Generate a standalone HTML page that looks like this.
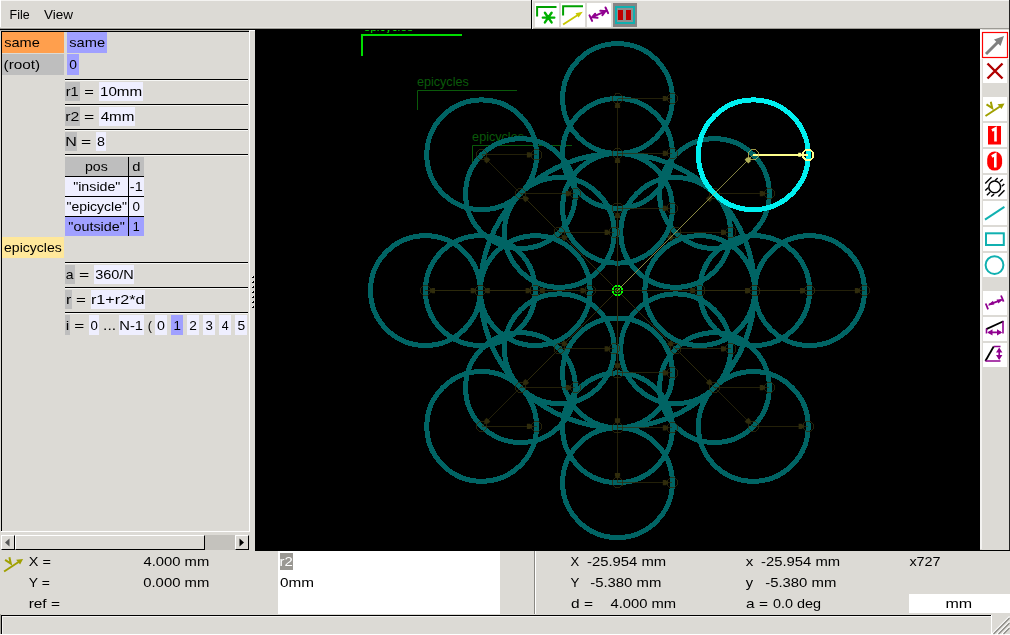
<!DOCTYPE html>
<html><head><meta charset="utf-8">
<style>
*{margin:0;padding:0;box-sizing:border-box}
html,body{width:1010px;height:635px;overflow:hidden;background:#dcdad5;font-family:"Liberation Sans",sans-serif;font-size:13px;color:#000;position:relative}
.a{position:absolute}
.g{position:absolute;background:#bebebe;height:19px}
.lv{position:absolute;background:#efefff;height:19px}
.pu{position:absolute;background:#a0a0ff;height:19px}
.rule{position:absolute;height:2px;left:65px;width:183px;border-top:1px solid #000;border-bottom:1px solid #f6f6f4}
.btn{position:absolute;background:#fff}
.rb{position:absolute;left:982px;width:26px;height:25px;background:#fff}
</style></head><body>
<!-- window edges -->
<div class="a" style="left:0;top:0;width:1010px;height:1px;background:#f4f3f1"></div>
<div class="a" style="left:0;top:0;width:1px;height:29px;background:#fff"></div>
<!-- menu -->
<div class="a" style="left:0;top:27px;width:531px;height:1px;background:#e6e5e1"></div>
<div class="a" style="left:0;top:28px;width:1010px;height:1px;background:#9c9a94"></div>
<div class="a" style="left:0;top:29px;width:1010px;height:1px;background:#000"></div>
<div class="a" style="left:0;top:30px;width:249px;height:1px;background:#b4b2ac"></div>
<!-- top toolbar -->
<div class="a" style="left:531px;top:0;width:1px;height:29px;background:#000"></div>
<div class="a" style="left:532px;top:0;width:1px;height:29px;background:#f4f3f1"></div>
<div class="btn" style="left:535px;top:3px;width:24px;height:24px"></div>
<div class="btn" style="left:561px;top:3px;width:24px;height:24px"></div>
<div class="btn" style="left:587px;top:3px;width:24px;height:24px"></div>
<svg class="a" style="left:530px;top:0" width="85" height="29" viewBox="530 0 85 29">
<path d="M537.1 16.5V7.1H556.5" stroke="#00a000" stroke-width="2" fill="none"/>
<path d="M542.8 17.6H554.3M544.9 12.7L551.6 22.4M551.6 12.7L544.9 22.4" stroke="#00b000" stroke-width="2.4" stroke-linecap="round"/>
<path d="M563.1 15.5V6.2H583" stroke="#00a000" stroke-width="2" fill="none"/>
<path d="M563.1 24.5L579 14.2" stroke="#c8c800" stroke-width="1.8"/>
<path d="M582.8 11.8L575.5 13.2L578.6 17.6Z" fill="#c8c800"/>
<path d="M592.1 17.2L605.7 11.2M589.5 15.3L592.1 20.9M605.5 7.5L608.1 13.1M595.2 13.7L592.1 17.2L597.5 17.8M600.3 10.8L605.5 11.2L602.4 15.1" stroke="#900090" stroke-width="2" fill="none" stroke-linecap="round"/>
</svg>
<div class="a" style="left:613px;top:3px;width:24px;height:24px;background:#858585">
<div class="a" style="left:2px;top:3px;width:20px;height:18px;border:2px solid #10b0b0;background:#909090"></div>
<div class="a" style="left:5px;top:7px;width:5px;height:10px;background:#c00000"></div>
<div class="a" style="left:13px;top:7px;width:5px;height:10px;background:#c00000"></div>
</div>

<!-- left panel -->
<div class="a" style="left:1px;top:31px;width:248px;height:1px;background:#000"></div>
<div class="a" style="left:1px;top:31px;width:1px;height:500px;background:#000"></div>
<div class="a" style="left:1px;top:531px;width:249px;height:1px;background:#fff"></div>
<div class="a" style="left:249px;top:31px;width:1px;height:501px;background:#fff"></div>
<div class="a" style="left:249px;top:30px;width:6px;height:1px;background:#fff"></div>
<!-- splitter grip -->
<svg class="a" style="left:250px;top:274px" width="5" height="36" shape-rendering="crispEdges"><rect x="2" y="2" width="1" height="1" fill="#fff"/><rect x="3" y="2" width="1" height="2" fill="#000"/><rect x="2" y="3" width="1" height="1" fill="#000"/><rect x="2" y="7" width="1" height="1" fill="#fff"/><rect x="3" y="7" width="1" height="2" fill="#000"/><rect x="2" y="8" width="1" height="1" fill="#000"/><rect x="2" y="12" width="1" height="1" fill="#fff"/><rect x="3" y="12" width="1" height="2" fill="#000"/><rect x="2" y="13" width="1" height="1" fill="#000"/><rect x="2" y="17" width="1" height="1" fill="#fff"/><rect x="3" y="17" width="1" height="2" fill="#000"/><rect x="2" y="18" width="1" height="1" fill="#000"/><rect x="2" y="22" width="1" height="1" fill="#fff"/><rect x="3" y="22" width="1" height="2" fill="#000"/><rect x="2" y="23" width="1" height="1" fill="#000"/><rect x="2" y="27" width="1" height="1" fill="#fff"/><rect x="3" y="27" width="1" height="2" fill="#000"/><rect x="2" y="28" width="1" height="1" fill="#000"/><rect x="2" y="32" width="1" height="1" fill="#fff"/><rect x="3" y="32" width="1" height="2" fill="#000"/><rect x="2" y="33" width="1" height="1" fill="#000"/></svg>

<div class="a" style="left:2px;top:32px;width:62px;height:21px;background:#ff9f4d"></div>
<div class="pu" style="left:67px;top:32px;width:40px;height:21px"></div>
<div class="g" style="left:2px;top:54px;width:62px;height:21px"></div>
<div class="pu" style="left:67px;top:54px;width:12px;height:21px"></div>

<div class="rule" style="top:79px"></div>
<div class="g" style="left:65px;top:82px;width:15px"></div>
<div class="lv" style="left:99px;top:82px;width:44px"></div>
<div class="rule" style="top:104px"></div>
<div class="g" style="left:65px;top:107px;width:15px"></div>
<div class="lv" style="left:99px;top:107px;width:36px"></div>
<div class="rule" style="top:129px"></div>
<div class="g" style="left:65px;top:132px;width:12px"></div>
<div class="lv" style="left:96px;top:132px;width:10px"></div>
<div class="rule" style="top:154px"></div>
<!-- table -->
<div class="g" style="left:65px;top:157px;width:79px"></div>
<div class="lv" style="left:65px;top:177px;width:79px"></div>
<div class="lv" style="left:65px;top:197px;width:79px"></div>
<div class="pu" style="left:65px;top:217px;width:79px"></div>
<div class="a" style="left:65px;top:176px;width:79px;height:1px;background:#000"></div>
<div class="a" style="left:65px;top:196px;width:79px;height:1px;background:#000"></div>
<div class="a" style="left:65px;top:216px;width:79px;height:1px;background:#000"></div>
<div class="a" style="left:128px;top:157px;width:1px;height:79px;background:#000"></div>

<div class="a" style="left:2px;top:237px;width:62px;height:21px;background:#ffe89b"></div>
<div class="rule" style="top:262px"></div>
<div class="g" style="left:65px;top:265px;width:10px"></div>
<div class="lv" style="left:94px;top:265px;width:40px"></div>
<div class="rule" style="top:287px"></div>
<div class="g" style="left:65px;top:290px;width:7px"></div>
<div class="lv" style="left:91px;top:290px;width:54px"></div>
<div class="rule" style="top:312px"></div>
<div class="g" style="left:65px;top:315px;width:5px;height:20px"></div>
<div class="lv" style="left:89px;top:315px;width:10px;height:20px"></div>
<div class="lv" style="left:119px;top:315px;width:25px;height:20px"></div>
<div class="lv" style="left:155px;top:315px;width:12px;height:20px"></div>
<div class="pu" style="left:171px;top:315px;width:12px;height:20px"></div>
<div class="lv" style="left:187px;top:315px;width:12px;height:20px"></div>
<div class="lv" style="left:203px;top:315px;width:12px;height:20px"></div>
<div class="lv" style="left:219px;top:315px;width:12px;height:20px"></div>
<div class="lv" style="left:235px;top:315px;width:12px;height:20px"></div>

<!-- scrollbar -->
<div class="a" style="left:1px;top:535px;width:248px;height:15px;background:#c4c2bd"></div>
<div class="a" style="left:1px;top:535px;width:14px;height:15px;background:#dcdad5;border-top:1px solid #fff;border-left:1px solid #fff;border-right:1px solid #000;border-bottom:1px solid #000"></div>
<svg class="a" style="left:4px;top:538px" width="8" height="10"><path d="M1 4.5L5.5 0.5V8.5Z" fill="#555"/></svg>
<div class="a" style="left:15px;top:535px;width:190px;height:15px;background:#dcdad5;border-top:1px solid #fff;border-left:1px solid #fff;border-right:1px solid #000;border-bottom:1px solid #000"></div>
<div class="a" style="left:235px;top:535px;width:14px;height:15px;background:#dcdad5;border-top:1px solid #fff;border-left:1px solid #fff;border-right:1px solid #000;border-bottom:1px solid #000"></div>
<svg class="a" style="left:238px;top:538px" width="8" height="10"><path d="M6 4.5L1.5 0.5V8.5Z" fill="#000"/></svg>

<!-- canvas -->
<div class="a" style="left:255px;top:29px;width:725px;height:522px;background:#000;overflow:hidden">
<svg class="a" style="left:-255px;top:-29px" width="1010" height="635">
<path d="M362 56V35H462" stroke="#00dc00" stroke-width="2" fill="none"/>
<path d="M417.5 110V90.5H517" stroke="#0a5a0a" stroke-width="1" fill="none"/>
<path d="M472.5 165V145.5H572" stroke="#0a5a0a" stroke-width="1" fill="none"/>
<clipPath id="lc"><rect x="255" y="30" width="725" height="600"/></clipPath>
<clipPath id="lc1"><rect x="255" y="30" width="725" height="3"/></clipPath>
<g font-family="Liberation Sans" font-size="13" clip-path="url(#lc1)"><text transform="translate(363.44,30.8) scale(0.9275,1)" fill="#00dc00">epicycles</text></g>
<g font-family="Liberation Sans" font-size="13"><text transform="translate(416.92,86) scale(0.9695,1)" fill="#0a5a0a">epicycles</text>
<text transform="translate(472.12,141) scale(0.9695,1)" fill="#0a5a0a">epicycles</text></g>
<circle cx="617.5" cy="290.6" r="137.2" stroke="#006464" stroke-width="5" fill="none" shape-rendering="crispEdges"/>
<circle cx="699.8" cy="290.6" r="54.9" stroke="#006464" stroke-width="5" fill="none" shape-rendering="crispEdges"/>
<circle cx="675.7" cy="232.4" r="54.9" stroke="#006464" stroke-width="5" fill="none" shape-rendering="crispEdges"/>
<circle cx="617.5" cy="208.3" r="54.9" stroke="#006464" stroke-width="5" fill="none" shape-rendering="crispEdges"/>
<circle cx="559.3" cy="232.4" r="54.9" stroke="#006464" stroke-width="5" fill="none" shape-rendering="crispEdges"/>
<circle cx="535.2" cy="290.6" r="54.9" stroke="#006464" stroke-width="5" fill="none" shape-rendering="crispEdges"/>
<circle cx="559.3" cy="348.8" r="54.9" stroke="#006464" stroke-width="5" fill="none" shape-rendering="crispEdges"/>
<circle cx="617.5" cy="372.9" r="54.9" stroke="#006464" stroke-width="5" fill="none" shape-rendering="crispEdges"/>
<circle cx="675.7" cy="348.8" r="54.9" stroke="#006464" stroke-width="5" fill="none" shape-rendering="crispEdges"/>
<circle cx="754.7" cy="290.6" r="54.9" stroke="#006464" stroke-width="5" fill="none" shape-rendering="crispEdges"/>
<circle cx="714.5" cy="193.6" r="54.9" stroke="#006464" stroke-width="5" fill="none" shape-rendering="crispEdges"/>
<circle cx="617.5" cy="153.4" r="54.9" stroke="#006464" stroke-width="5" fill="none" shape-rendering="crispEdges"/>
<circle cx="520.5" cy="193.6" r="54.9" stroke="#006464" stroke-width="5" fill="none" shape-rendering="crispEdges"/>
<circle cx="480.3" cy="290.6" r="54.9" stroke="#006464" stroke-width="5" fill="none" shape-rendering="crispEdges"/>
<circle cx="520.5" cy="387.6" r="54.9" stroke="#006464" stroke-width="5" fill="none" shape-rendering="crispEdges"/>
<circle cx="617.5" cy="427.8" r="54.9" stroke="#006464" stroke-width="5" fill="none" shape-rendering="crispEdges"/>
<circle cx="714.5" cy="387.6" r="54.9" stroke="#006464" stroke-width="5" fill="none" shape-rendering="crispEdges"/>
<circle cx="809.6" cy="290.6" r="54.9" stroke="#006464" stroke-width="5" fill="none" shape-rendering="crispEdges"/>
<circle cx="617.5" cy="98.5" r="54.9" stroke="#006464" stroke-width="5" fill="none" shape-rendering="crispEdges"/>
<circle cx="481.7" cy="154.8" r="54.9" stroke="#006464" stroke-width="5" fill="none" shape-rendering="crispEdges"/>
<circle cx="425.4" cy="290.6" r="54.9" stroke="#006464" stroke-width="5" fill="none" shape-rendering="crispEdges"/>
<circle cx="481.7" cy="426.4" r="54.9" stroke="#006464" stroke-width="5" fill="none" shape-rendering="crispEdges"/>
<circle cx="617.5" cy="482.7" r="54.9" stroke="#006464" stroke-width="5" fill="none" shape-rendering="crispEdges"/>
<circle cx="753.3" cy="426.4" r="54.9" stroke="#006464" stroke-width="5" fill="none" shape-rendering="crispEdges"/>
<circle cx="617.5" cy="290.6" r="4.6" stroke="#00ff00" stroke-width="2" fill="none" shape-rendering="crispEdges"/>
<circle cx="617.5" cy="290.6" r="2.2" stroke="#00e000" stroke-width="1" fill="none" shape-rendering="crispEdges"/>
<path d="M617.5 290.6L699.8 290.6M699.8 290.6H754.7M617.5 290.6L675.7 232.4M675.7 232.4H730.6M617.5 290.6L617.5 208.3M617.5 208.3H672.4M617.5 290.6L559.3 232.4M559.3 232.4H614.2M617.5 290.6L535.2 290.6M535.2 290.6H590.1M617.5 290.6L559.3 348.8M559.3 348.8H614.2M617.5 290.6L617.5 372.9M617.5 372.9H672.4M617.5 290.6L675.7 348.8M675.7 348.8H730.6M617.5 290.6L754.7 290.6M754.7 290.6H809.6M617.5 290.6L714.5 193.6M714.5 193.6H769.4M617.5 290.6L617.5 153.4M617.5 153.4H672.4M617.5 290.6L520.5 193.6M520.5 193.6H575.4M617.5 290.6L480.3 290.6M480.3 290.6H535.2M617.5 290.6L520.5 387.6M520.5 387.6H575.4M617.5 290.6L617.5 427.8M617.5 427.8H672.4M617.5 290.6L714.5 387.6M714.5 387.6H769.4M617.5 290.6L809.6 290.6M809.6 290.6H864.5M617.5 290.6L617.5 98.5M617.5 98.5H672.4M617.5 290.6L481.7 154.8M481.7 154.8H536.5M617.5 290.6L425.4 290.6M425.4 290.6H480.3M617.5 290.6L481.7 426.4M481.7 426.4H536.5M617.5 290.6L617.5 482.7M617.5 482.7H672.4M617.5 290.6L753.3 426.4M753.3 426.4H808.2" stroke="#302c0c" stroke-width="0.72" fill="none" shape-rendering="crispEdges"/>
<path d="M696.2 290.6L693.2 293.2L690.2 293.2L690.2 288.0L693.2 288.0Z" fill="#302c0c"/>
<path d="M751.1 290.6L748.1 293.2L745.1 293.2L745.1 288.0L748.1 288.0Z" fill="#302c0c"/>
<path d="M697.5 285.6L702.1 285.6L704.8 288.3L704.8 292.9L702.1 295.6L697.5 295.6L694.8 292.9L694.8 288.3ZM752.4 285.6L757.0 285.6L759.7 288.3L759.7 292.9L757.0 295.6L752.4 295.6L749.7 292.9L749.7 288.3Z" stroke="#302c0c" stroke-width="0.8" fill="none" shape-rendering="crispEdges"/>
<path d="M673.2 234.9L672.9 238.9L670.8 241.0L667.1 237.3L669.2 235.2Z" fill="#302c0c"/>
<path d="M727.0 232.4L724.0 235.0L721.0 235.0L721.0 229.8L724.0 229.8Z" fill="#302c0c"/>
<path d="M673.4 227.4L678.0 227.4L680.7 230.1L680.7 234.7L678.0 237.4L673.4 237.4L670.7 234.7L670.7 230.1ZM728.3 227.4L732.9 227.4L735.6 230.1L735.6 234.7L732.9 237.4L728.3 237.4L725.6 234.7L725.6 230.1Z" stroke="#302c0c" stroke-width="0.8" fill="none" shape-rendering="crispEdges"/>
<path d="M617.5 211.9L620.1 214.9L620.1 217.9L614.9 217.9L614.9 214.9Z" fill="#302c0c"/>
<path d="M668.8 208.3L665.8 210.9L662.8 210.9L662.8 205.7L665.8 205.7Z" fill="#302c0c"/>
<path d="M615.2 203.3L619.8 203.3L622.5 206.0L622.5 210.6L619.8 213.3L615.2 213.3L612.5 210.6L612.5 206.0ZM670.1 203.3L674.7 203.3L677.4 206.0L677.4 210.6L674.7 213.3L670.1 213.3L667.4 210.6L667.4 206.0Z" stroke="#302c0c" stroke-width="0.8" fill="none" shape-rendering="crispEdges"/>
<path d="M561.8 234.9L565.8 235.2L567.9 237.3L564.2 241.0L562.1 238.9Z" fill="#302c0c"/>
<path d="M610.6 232.4L607.6 235.0L604.6 235.0L604.6 229.8L607.6 229.8Z" fill="#302c0c"/>
<path d="M557.0 227.4L561.6 227.4L564.3 230.1L564.3 234.7L561.6 237.4L557.0 237.4L554.3 234.7L554.3 230.1ZM611.9 227.4L616.5 227.4L619.2 230.1L619.2 234.7L616.5 237.4L611.9 237.4L609.2 234.7L609.2 230.1Z" stroke="#302c0c" stroke-width="0.8" fill="none" shape-rendering="crispEdges"/>
<path d="M538.8 290.6L541.8 288.0L544.8 288.0L544.8 293.2L541.8 293.2Z" fill="#302c0c"/>
<path d="M586.5 290.6L583.5 293.2L580.5 293.2L580.5 288.0L583.5 288.0Z" fill="#302c0c"/>
<path d="M532.9 285.6L537.5 285.6L540.2 288.3L540.2 292.9L537.5 295.6L532.9 295.6L530.2 292.9L530.2 288.3ZM587.8 285.6L592.4 285.6L595.1 288.3L595.1 292.9L592.4 295.6L587.8 295.6L585.1 292.9L585.1 288.3Z" stroke="#302c0c" stroke-width="0.8" fill="none" shape-rendering="crispEdges"/>
<path d="M561.8 346.3L562.1 342.3L564.2 340.2L567.9 343.9L565.8 346.0Z" fill="#302c0c"/>
<path d="M610.6 348.8L607.6 351.4L604.6 351.4L604.6 346.2L607.6 346.2Z" fill="#302c0c"/>
<path d="M557.0 343.8L561.6 343.8L564.3 346.5L564.3 351.1L561.6 353.8L557.0 353.8L554.3 351.1L554.3 346.5ZM611.9 343.8L616.5 343.8L619.2 346.5L619.2 351.1L616.5 353.8L611.9 353.8L609.2 351.1L609.2 346.5Z" stroke="#302c0c" stroke-width="0.8" fill="none" shape-rendering="crispEdges"/>
<path d="M617.5 369.3L614.9 366.3L614.9 363.3L620.1 363.3L620.1 366.3Z" fill="#302c0c"/>
<path d="M668.8 372.9L665.8 375.5L662.8 375.5L662.8 370.3L665.8 370.3Z" fill="#302c0c"/>
<path d="M615.2 367.9L619.8 367.9L622.5 370.6L622.5 375.2L619.8 377.9L615.2 377.9L612.5 375.2L612.5 370.6ZM670.1 367.9L674.7 367.9L677.4 370.6L677.4 375.2L674.7 377.9L670.1 377.9L667.4 375.2L667.4 370.6Z" stroke="#302c0c" stroke-width="0.8" fill="none" shape-rendering="crispEdges"/>
<path d="M673.2 346.3L669.2 346.0L667.1 343.9L670.8 340.2L672.9 342.3Z" fill="#302c0c"/>
<path d="M727.0 348.8L724.0 351.4L721.0 351.4L721.0 346.2L724.0 346.2Z" fill="#302c0c"/>
<path d="M673.4 343.8L678.0 343.8L680.7 346.5L680.7 351.1L678.0 353.8L673.4 353.8L670.7 351.1L670.7 346.5ZM728.3 343.8L732.9 343.8L735.6 346.5L735.6 351.1L732.9 353.8L728.3 353.8L725.6 351.1L725.6 346.5Z" stroke="#302c0c" stroke-width="0.8" fill="none" shape-rendering="crispEdges"/>
<path d="M751.1 290.6L748.1 293.2L745.1 293.2L745.1 288.0L748.1 288.0Z" fill="#302c0c"/>
<path d="M806.0 290.6L803.0 293.2L800.0 293.2L800.0 288.0L803.0 288.0Z" fill="#302c0c"/>
<path d="M752.4 285.6L757.0 285.6L759.7 288.3L759.7 292.9L757.0 295.6L752.4 295.6L749.7 292.9L749.7 288.3ZM807.3 285.6L811.9 285.6L814.6 288.3L814.6 292.9L811.9 295.6L807.3 295.6L804.6 292.9L804.6 288.3Z" stroke="#302c0c" stroke-width="0.8" fill="none" shape-rendering="crispEdges"/>
<path d="M712.0 196.1L711.7 200.1L709.6 202.2L705.9 198.5L708.0 196.4Z" fill="#302c0c"/>
<path d="M765.8 193.6L762.8 196.2L759.8 196.2L759.8 191.0L762.8 191.0Z" fill="#302c0c"/>
<path d="M712.2 188.6L716.8 188.6L719.5 191.3L719.5 195.9L716.8 198.6L712.2 198.6L709.5 195.9L709.5 191.3ZM767.1 188.6L771.7 188.6L774.4 191.3L774.4 195.9L771.7 198.6L767.1 198.6L764.4 195.9L764.4 191.3Z" stroke="#302c0c" stroke-width="0.8" fill="none" shape-rendering="crispEdges"/>
<path d="M617.5 157.0L620.1 160.0L620.1 163.0L614.9 163.0L614.9 160.0Z" fill="#302c0c"/>
<path d="M668.8 153.4L665.8 156.0L662.8 156.0L662.8 150.8L665.8 150.8Z" fill="#302c0c"/>
<path d="M615.2 148.4L619.8 148.4L622.5 151.1L622.5 155.7L619.8 158.4L615.2 158.4L612.5 155.7L612.5 151.1ZM670.1 148.4L674.7 148.4L677.4 151.1L677.4 155.7L674.7 158.4L670.1 158.4L667.4 155.7L667.4 151.1Z" stroke="#302c0c" stroke-width="0.8" fill="none" shape-rendering="crispEdges"/>
<path d="M523.0 196.1L527.0 196.4L529.1 198.5L525.4 202.2L523.3 200.1Z" fill="#302c0c"/>
<path d="M571.8 193.6L568.8 196.2L565.8 196.2L565.8 191.0L568.8 191.0Z" fill="#302c0c"/>
<path d="M518.2 188.6L522.8 188.6L525.5 191.3L525.5 195.9L522.8 198.6L518.2 198.6L515.5 195.9L515.5 191.3ZM573.1 188.6L577.7 188.6L580.4 191.3L580.4 195.9L577.7 198.6L573.1 198.6L570.4 195.9L570.4 191.3Z" stroke="#302c0c" stroke-width="0.8" fill="none" shape-rendering="crispEdges"/>
<path d="M483.9 290.6L486.9 288.0L489.9 288.0L489.9 293.2L486.9 293.2Z" fill="#302c0c"/>
<path d="M531.6 290.6L528.6 293.2L525.6 293.2L525.6 288.0L528.6 288.0Z" fill="#302c0c"/>
<path d="M478.0 285.6L482.6 285.6L485.3 288.3L485.3 292.9L482.6 295.6L478.0 295.6L475.3 292.9L475.3 288.3ZM532.9 285.6L537.5 285.6L540.2 288.3L540.2 292.9L537.5 295.6L532.9 295.6L530.2 292.9L530.2 288.3Z" stroke="#302c0c" stroke-width="0.8" fill="none" shape-rendering="crispEdges"/>
<path d="M523.0 385.1L523.3 381.1L525.4 379.0L529.1 382.7L527.0 384.8Z" fill="#302c0c"/>
<path d="M571.8 387.6L568.8 390.2L565.8 390.2L565.8 385.0L568.8 385.0Z" fill="#302c0c"/>
<path d="M518.2 382.6L522.8 382.6L525.5 385.3L525.5 389.9L522.8 392.6L518.2 392.6L515.5 389.9L515.5 385.3ZM573.1 382.6L577.7 382.6L580.4 385.3L580.4 389.9L577.7 392.6L573.1 392.6L570.4 389.9L570.4 385.3Z" stroke="#302c0c" stroke-width="0.8" fill="none" shape-rendering="crispEdges"/>
<path d="M617.5 424.2L614.9 421.2L614.9 418.2L620.1 418.2L620.1 421.2Z" fill="#302c0c"/>
<path d="M668.8 427.8L665.8 430.4L662.8 430.4L662.8 425.2L665.8 425.2Z" fill="#302c0c"/>
<path d="M615.2 422.8L619.8 422.8L622.5 425.5L622.5 430.1L619.8 432.8L615.2 432.8L612.5 430.1L612.5 425.5ZM670.1 422.8L674.7 422.8L677.4 425.5L677.4 430.1L674.7 432.8L670.1 432.8L667.4 430.1L667.4 425.5Z" stroke="#302c0c" stroke-width="0.8" fill="none" shape-rendering="crispEdges"/>
<path d="M712.0 385.1L708.0 384.8L705.9 382.7L709.6 379.0L711.7 381.1Z" fill="#302c0c"/>
<path d="M765.8 387.6L762.8 390.2L759.8 390.2L759.8 385.0L762.8 385.0Z" fill="#302c0c"/>
<path d="M712.2 382.6L716.8 382.6L719.5 385.3L719.5 389.9L716.8 392.6L712.2 392.6L709.5 389.9L709.5 385.3ZM767.1 382.6L771.7 382.6L774.4 385.3L774.4 389.9L771.7 392.6L767.1 392.6L764.4 389.9L764.4 385.3Z" stroke="#302c0c" stroke-width="0.8" fill="none" shape-rendering="crispEdges"/>
<path d="M806.0 290.6L803.0 293.2L800.0 293.2L800.0 288.0L803.0 288.0Z" fill="#302c0c"/>
<path d="M860.9 290.6L857.9 293.2L854.9 293.2L854.9 288.0L857.9 288.0Z" fill="#302c0c"/>
<path d="M807.3 285.6L811.9 285.6L814.6 288.3L814.6 292.9L811.9 295.6L807.3 295.6L804.6 292.9L804.6 288.3ZM862.2 285.6L866.8 285.6L869.5 288.3L869.5 292.9L866.8 295.6L862.2 295.6L859.5 292.9L859.5 288.3Z" stroke="#302c0c" stroke-width="0.8" fill="none" shape-rendering="crispEdges"/>
<path d="M617.5 102.1L620.1 105.1L620.1 108.1L614.9 108.1L614.9 105.1Z" fill="#302c0c"/>
<path d="M668.8 98.5L665.8 101.1L662.8 101.1L662.8 95.9L665.8 95.9Z" fill="#302c0c"/>
<path d="M615.2 93.5L619.8 93.5L622.5 96.2L622.5 100.8L619.8 103.5L615.2 103.5L612.5 100.8L612.5 96.2ZM670.1 93.5L674.7 93.5L677.4 96.2L677.4 100.8L674.7 103.5L670.1 103.5L667.4 100.8L667.4 96.2Z" stroke="#302c0c" stroke-width="0.8" fill="none" shape-rendering="crispEdges"/>
<path d="M484.2 157.3L488.2 157.6L490.3 159.7L486.6 163.4L484.5 161.3Z" fill="#302c0c"/>
<path d="M532.9 154.8L529.9 157.4L526.9 157.4L526.9 152.2L529.9 152.2Z" fill="#302c0c"/>
<path d="M479.4 149.8L484.0 149.8L486.7 152.5L486.7 157.1L484.0 159.8L479.4 159.8L476.7 157.1L476.7 152.5ZM534.2 149.8L538.8 149.8L541.5 152.5L541.5 157.1L538.8 159.8L534.2 159.8L531.5 157.1L531.5 152.5Z" stroke="#302c0c" stroke-width="0.8" fill="none" shape-rendering="crispEdges"/>
<path d="M429.0 290.6L432.0 288.0L435.0 288.0L435.0 293.2L432.0 293.2Z" fill="#302c0c"/>
<path d="M476.7 290.6L473.7 293.2L470.7 293.2L470.7 288.0L473.7 288.0Z" fill="#302c0c"/>
<path d="M423.1 285.6L427.7 285.6L430.4 288.3L430.4 292.9L427.7 295.6L423.1 295.6L420.4 292.9L420.4 288.3ZM478.0 285.6L482.6 285.6L485.3 288.3L485.3 292.9L482.6 295.6L478.0 295.6L475.3 292.9L475.3 288.3Z" stroke="#302c0c" stroke-width="0.8" fill="none" shape-rendering="crispEdges"/>
<path d="M484.2 423.9L484.5 419.9L486.6 417.8L490.3 421.5L488.2 423.6Z" fill="#302c0c"/>
<path d="M532.9 426.4L529.9 429.0L526.9 429.0L526.9 423.8L529.9 423.8Z" fill="#302c0c"/>
<path d="M479.4 421.4L484.0 421.4L486.7 424.1L486.7 428.7L484.0 431.4L479.4 431.4L476.7 428.7L476.7 424.1ZM534.2 421.4L538.8 421.4L541.5 424.1L541.5 428.7L538.8 431.4L534.2 431.4L531.5 428.7L531.5 424.1Z" stroke="#302c0c" stroke-width="0.8" fill="none" shape-rendering="crispEdges"/>
<path d="M617.5 479.1L614.9 476.1L614.9 473.1L620.1 473.1L620.1 476.1Z" fill="#302c0c"/>
<path d="M668.8 482.7L665.8 485.3L662.8 485.3L662.8 480.1L665.8 480.1Z" fill="#302c0c"/>
<path d="M615.2 477.7L619.8 477.7L622.5 480.4L622.5 485.0L619.8 487.7L615.2 487.7L612.5 485.0L612.5 480.4ZM670.1 477.7L674.7 477.7L677.4 480.4L677.4 485.0L674.7 487.7L670.1 487.7L667.4 485.0L667.4 480.4Z" stroke="#302c0c" stroke-width="0.8" fill="none" shape-rendering="crispEdges"/>
<path d="M750.8 423.9L746.8 423.6L744.7 421.5L748.4 417.8L750.5 419.9Z" fill="#302c0c"/>
<path d="M804.6 426.4L801.6 429.0L798.6 429.0L798.6 423.8L801.6 423.8Z" fill="#302c0c"/>
<path d="M751.0 421.4L755.6 421.4L758.3 424.1L758.3 428.7L755.6 431.4L751.0 431.4L748.3 428.7L748.3 424.1ZM805.9 421.4L810.5 421.4L813.2 424.1L813.2 428.7L810.5 431.4L805.9 431.4L803.2 428.7L803.2 424.1Z" stroke="#302c0c" stroke-width="0.8" fill="none" shape-rendering="crispEdges"/>
<circle cx="753.3" cy="154.8" r="54.9" stroke="#00f0f0" stroke-width="5" fill="none" shape-rendering="crispEdges"/>
<line x1="617.5" y1="290.6" x2="753.3" y2="154.8" stroke="#b4b45a" stroke-width="0.72" shape-rendering="crispEdges"/>
<path d="M750.8 157.3L750.5 161.3L748.4 163.4L744.7 159.7L746.8 157.6Z" fill="#b4b45a"/>
<path d="M753.3 154.8H808.2" stroke="#ffff8c" stroke-width="2" shape-rendering="crispEdges"/>
<path d="M802.2 154.8L800.7 156.8L798.2 156.8L798.2 152.8L800.7 152.8Z" fill="#ffff8c"/>
<path d="M751.0 149.8L755.6 149.8L758.3 152.5L758.3 157.1L755.6 159.8L751.0 159.8L748.3 157.1L748.3 152.5Z" stroke="#c8be5a" stroke-width="0.8" fill="none" shape-rendering="crispEdges"/>
<path d="M805.9 149.8L810.5 149.8L813.2 152.5L813.2 157.1L810.5 159.8L805.9 159.8L803.2 157.1L803.2 152.5Z" stroke="#ffff8c" stroke-width="1.6" fill="none" shape-rendering="crispEdges"/>
</svg>
</div>

<!-- right toolbar -->
<div class="a" style="left:980px;top:29px;width:29px;height:520px;background:#dcdad5;border-left:2px solid #f4f3f1"></div>
<div class="a" style="left:1009px;top:0;width:1px;height:551px;background:#222"></div>
<div class="a" style="left:980px;top:550px;width:30px;height:1px;background:#000"></div>
<svg class="a" style="left:980px;top:29px" width="30" height="521" viewBox="980 29 30 521">
<rect x="980" y="30" width="29" height="29" fill="#fff"/>
<rect x="982.5" y="32.5" width="25" height="25" fill="none" stroke="#f00" stroke-width="1.2"/>
<path d="M986 54L999 41" stroke="#808080" stroke-width="3"/>
<path d="M1004 36L994 39.5L1000.5 46Z" fill="#808080"/>
<rect x="983" y="59" width="24" height="24" fill="#fff"/>
<path d="M987.5 63.5L1002.5 78.5M1002.5 63.5L987.5 78.5" stroke="#b00000" stroke-width="2.4"/>
<rect x="983" y="97" width="24" height="24" fill="#fff"/>
<path d="M985.5 116L1000 106.5" stroke="#a0a000" stroke-width="2"/>
<path d="M1004.5 103.4L997.5 104.2L1001.5 109Z" fill="#a0a000"/>
<path d="M986.5 104.4L992.2 108.1L990.8 101.7" stroke="#a0a000" stroke-width="2" fill="none"/>
<rect x="983" y="123" width="24" height="24" fill="#fff"/>
<rect x="988" y="126" width="13" height="18.5" fill="#f00"/>
<path d="M992 130.5L995.5 128.5V141.5" stroke="#fff" stroke-width="2.6" fill="none"/>
<rect x="983" y="149" width="24" height="24" fill="#fff"/>
<rect x="987.2" y="151.6" width="14.9" height="19" rx="7.4" ry="7.4" fill="#f00"/>
<path d="M991.8 156.5L995.3 154.5V167.5" stroke="#fff" stroke-width="2.6" fill="none"/>
<rect x="983" y="175" width="24" height="24" fill="#fff"/>
<circle cx="994.7" cy="186.9" r="5.9" fill="none" stroke="#000" stroke-width="1.5"/>
<path d="M985.2 183.6L991.5 177.2M995.1 180.4L997.7 177.9M1000 181.8L1002.7 179.3M1001.7 186.3L1004.3 184M998.4 196.5L1004.5 190.2M985.3 190.6L988.1 187.7M986.9 195.3L990.2 192M991.2 196.5L994.1 194.1" stroke="#000" stroke-width="1.4"/>
<rect x="983" y="201" width="24" height="24" fill="#fff"/>
<path d="M985 219.7L1004.4 206.8" stroke="#10b0b0" stroke-width="2"/>
<rect x="983" y="227" width="24" height="24" fill="#fff"/>
<rect x="986" y="233.3" width="17.8" height="11.7" fill="none" stroke="#10b0b0" stroke-width="2"/>
<rect x="983" y="253" width="24" height="24" fill="#fff"/>
<circle cx="994.5" cy="265.1" r="8.9" fill="none" stroke="#10b0b0" stroke-width="2"/>
<rect x="983" y="291" width="24" height="24" fill="#fff"/>
<path d="M989 304.7L1001.5 299.8M985.7 303.5L988.1 309.4M1001 295.5L1003.6 301.7" stroke="#900090" stroke-width="1.8" fill="none"/>
<path d="M987.5 305.4L993 300.7L994.3 304.4Z M1002.9 299.2L996.6 299.6L998.4 303.6Z" fill="#900090"/>
<rect x="983" y="317" width="24" height="24" fill="#fff"/>
<path d="M986.3 329.1L1003.5 321.3" stroke="#000" stroke-width="1.8"/>
<path d="M1003 321.3V333.5M986.5 328.5V333.5M988.5 332.4H1001" stroke="#900090" stroke-width="1.6" fill="none"/>
<path d="M987.3 332.4L992.5 329.3V335.5Z M1002.2 332.4L997 329.3V335.5Z" fill="#900090"/>
<rect x="983" y="343" width="24" height="24" fill="#fff"/>
<path d="M985.4 361L993.7 346.5" stroke="#000" stroke-width="1.8"/>
<path d="M993.7 346.5H1000.5M985.4 361H1000.5M999.2 349V359" stroke="#900090" stroke-width="1.6" fill="none"/>
<path d="M999.2 347.5L996 352.5H1002.4Z M999.2 360L996 355H1002.4Z" fill="#900090"/>
</svg>


<!-- status -->
<svg class="a" style="left:0;top:550px" width="30" height="30" viewBox="0 550 30 30"><g transform="translate(-981.4,455.5)"><path d="M985.5 116L1000 106.5" stroke="#a0a000" stroke-width="2"/><path d="M1004.5 103.4L997.5 104.2L1001.5 109Z" fill="#a0a000"/><path d="M986.5 104.4L992.2 108.1L990.8 101.7" stroke="#a0a000" stroke-width="2" fill="none"/></g></svg>
<div class="a" style="left:278px;top:551px;width:222px;height:63px;background:#fff"></div>
<div class="a" style="left:280px;top:553px;width:13px;height:17px;background:#9a9893"></div>
<div class="a" style="left:534px;top:551px;width:1px;height:63px;background:#8a8883"></div>
<div class="a" style="left:535px;top:551px;width:1px;height:63px;background:#fff"></div>
<div class="a" style="left:909px;top:594px;width:101px;height:19px;background:#fff"></div>
<!-- status bar -->
<div class="a" style="left:0;top:614px;width:1px;height:21px;background:#a8a69f"></div>
<div class="a" style="left:1px;top:615px;width:990px;height:1px;background:#000"></div>
<div class="a" style="left:1px;top:615px;width:1px;height:19px;background:#000"></div>
<div class="a" style="left:2px;top:616px;width:989px;height:1px;background:#f4f3f1"></div>
<div class="a" style="left:2px;top:616px;width:1px;height:18px;background:#f4f3f1"></div>
<div class="a" style="left:0;top:634px;width:1010px;height:1px;background:#fff"></div>
<div class="a" style="left:991px;top:615px;width:1px;height:19px;background:#fff"></div>
<svg class="a" style="left:990px;top:614px" width="20" height="21" viewBox="990 614 20 21"><path d="M992 634L1009.5 616.5M997 634L1009.5 621.5M1002 634L1009.5 626.5" stroke="#fff" stroke-width="1.2"/><path d="M993.5 634L1009.5 618M998.5 634L1009.5 623M1003.5 634L1009.5 628" stroke="#8a8883" stroke-width="1.2"/></svg>

<svg class="a" style="left:0;top:0;will-change:transform" width="1010" height="635" font-family="Liberation Sans" font-size="13">
<text transform="translate(9.55,19) scale(0.9585,1)" fill="#000">File</text>
<text transform="translate(43.90,19) scale(1.0396,1)" fill="#000">View</text>
<text transform="translate(4.15,47) scale(1.1234,1)" fill="#000">same</text>
<text transform="translate(69.25,47) scale(1.1266,1)" fill="#000">same</text>
<text transform="translate(3.56,69) scale(1.1803,1)" fill="#000">(root)</text>
<text transform="translate(69.17,69) scale(1.0645,1)" fill="#000">0</text>
<text transform="translate(65.69,96) scale(1.1200,1)" fill="#000">r1</text>
<text transform="translate(84.14,96) scale(1.2698,1)" fill="#000">=</text>
<text transform="translate(99.93,96) scale(1.1720,1)" fill="#000">10mm</text>
<text transform="translate(65.20,121) scale(1.2200,1)" fill="#000">r2</text>
<text transform="translate(83.89,121) scale(1.3492,1)" fill="#000">=</text>
<text transform="translate(100.65,121) scale(1.1697,1)" fill="#000">4mm</text>
<text transform="translate(65.14,146) scale(1.2361,1)" fill="#000">N</text>
<text transform="translate(80.90,146) scale(1.3333,1)" fill="#000">=</text>
<text transform="translate(97.04,146) scale(1.0984,1)" fill="#000">8</text>
<text transform="translate(84.93,170.5) scale(1.0863,1)" fill="#000">pos</text>
<text transform="translate(132.13,170.5) scale(1.1356,1)" fill="#000">d</text>
<text transform="translate(73.14,191) scale(1.0952,1)" fill="#000">&quot;inside&quot;</text>
<text transform="translate(129.83,191) scale(1.1165,1)" fill="#000">-1</text>
<text transform="translate(66.45,211) scale(1.0764,1)" fill="#000">&quot;epicycle&quot;</text>
<text transform="translate(132.48,211) scale(1.0323,1)" fill="#000">0</text>
<text transform="translate(68.34,231) scale(1.1040,1)" fill="#000">&quot;outside&quot;</text>
<text transform="translate(132.64,231) scale(0.9643,1)" fill="#000">1</text>
<text transform="translate(4.05,252) scale(1.0802,1)" fill="#000">epicycles</text>
<text transform="translate(65.85,279) scale(1.0758,1)" fill="#000">a</text>
<text transform="translate(78.89,279) scale(1.3492,1)" fill="#000">=</text>
<text transform="translate(95.14,279) scale(1.1148,1)" fill="#000">360/N</text>
<text transform="translate(65.90,304) scale(1.2200,1)" fill="#000">r</text>
<text transform="translate(76.02,304) scale(1.3016,1)" fill="#000">=</text>
<text transform="translate(90.98,304) scale(1.2446,1)" fill="#000">r1+r2*d</text>
<text transform="translate(65.73,329.5) scale(1.2200,1)" fill="#000">i</text>
<text transform="translate(74.21,329.5) scale(1.3175,1)" fill="#000">=</text>
<text transform="translate(90.39,329.5) scale(1.0161,1)" fill="#000">0</text>
<text transform="translate(103.06,329.5) scale(1.2024,1)" fill="#000">...</text>
<text transform="translate(119.25,329.5) scale(1.1354,1)" fill="#000">N-1</text>
<text transform="translate(147.82,329.5) scale(0.9706,1)" fill="#000">(</text>
<text transform="translate(157.05,329.5) scale(1.0968,1)" fill="#000">0</text>
<text transform="translate(173.48,329.5) scale(1.0179,1)" fill="#000">1</text>
<text transform="translate(189.16,329.5) scale(1.0508,1)" fill="#000">2</text>
<text transform="translate(205.39,329.5) scale(1.0161,1)" fill="#000">3</text>
<text transform="translate(221.71,329.5) scale(0.9538,1)" fill="#000">4</text>
<text transform="translate(237.47,329.5) scale(1.0645,1)" fill="#000">5</text>
<text transform="translate(28.87,566) scale(1.1111,1)" fill="#000">X =</text>
<text transform="translate(28.77,587) scale(1.0699,1)" fill="#000">Y =</text>
<text transform="translate(28.63,608) scale(1.1895,1)" fill="#000">ref =</text>
<text transform="translate(143.46,566) scale(1.1396,1)" fill="#000">4.000 mm</text>
<text transform="translate(143.23,587) scale(1.1436,1)" fill="#000">0.000 mm</text>
<text transform="translate(279.56,566) scale(1.1500,1)" fill="#fff">r2</text>
<text transform="translate(280.01,587) scale(1.1782,1)" fill="#000">0mm</text>
<text transform="translate(570.60,566) scale(1.0000,1)" fill="#000">X</text>
<text transform="translate(587.01,566) scale(1.1429,1)" fill="#000">-25.954 mm</text>
<text transform="translate(570.49,587) scale(1.0253,1)" fill="#000">Y</text>
<text transform="translate(590.21,587) scale(1.1450,1)" fill="#000">-5.380 mm</text>
<text transform="translate(571.00,608) scale(1.1908,1)" fill="#000">d =</text>
<text transform="translate(610.46,608) scale(1.1378,1)" fill="#000">4.000 mm</text>
<text transform="translate(745.67,566) scale(1.1639,1)" fill="#000">x</text>
<text transform="translate(761.12,566) scale(1.1399,1)" fill="#000">-25.954 mm</text>
<text transform="translate(745.79,587) scale(1.1270,1)" fill="#000">y</text>
<text transform="translate(765.21,587) scale(1.1450,1)" fill="#000">-5.380 mm</text>
<text transform="translate(746.09,608) scale(1.1860,1)" fill="#000">a =</text>
<text transform="translate(773.05,608) scale(1.1095,1)" fill="#000">0.0 deg</text>
<text transform="translate(909.38,566) scale(1.1099,1)" fill="#000">x727</text>
<text transform="translate(945.49,608) scale(1.2362,1)" fill="#000">mm</text>
</svg>
</body></html>
